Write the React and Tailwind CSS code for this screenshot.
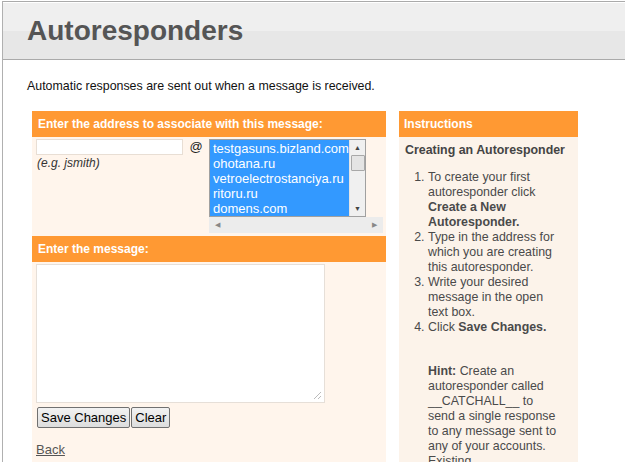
import React from 'react';

const domains = [
  'testgasuns.bizland.com',
  'ohotana.ru',
  'vetroelectrostanciya.ru',
  'ritoru.ru',
  'domens.com',
];

const Autoresponders = () => {
  return (
    <div className="min-h-[462px] bg-white font-['Liberation_Sans',Arial,sans-serif] text-[12px] text-[#222] overflow-hidden">
      <div className="ml-[2px] border-l border-[#b0b0b0] min-h-[462px]">
        {/* Page title band */}
        <div className="mt-[1px] border-t border-[#aaa] pt-[1px]">
          <div className="h-[57px] flex items-center pl-[24px] border-b border-[#aaa] bg-[linear-gradient(#efefef_50%,#e7e7e7_50%)]">
            <h1 className="text-[28px] font-bold text-[#555] leading-none">Autoresponders</h1>
          </div>
        </div>

        <p className="mt-[19px] pl-[24px] leading-[14px] text-[12.4px] text-[#111]">
          Automatic responses are sent out when a message is received.
        </p>

        <div className="flex gap-[13px] mt-[18px] pl-[29px]">
          {/* Left: form */}
          <div className="w-[354px] bg-[#fff5ec] pb-[8px]">
            <div className="h-[26px] bg-[#ff9933] flex items-center px-[6px] text-white font-bold">
              Enter the address to associate with this message:
            </div>

            <div className="flex pt-[2px] pl-[4px] h-[99px]">
              <div className="w-[147px]">
                <div className="h-[16px] bg-white border border-[#e8ded4]"></div>
                <div className="mt-[1px] italic text-[#333] leading-[15px] pl-[1px]">(e.g. jsmith)</div>
              </div>
              <div className="w-[26px] text-center text-[13px] leading-[14px] pt-[1px] text-[#222]">@</div>
              <div className="flex-1 flex flex-col">
                <div className="flex h-[78px] w-[157px] border border-[#a0a0a0] bg-white">
                  <ul className="flex-1 bg-[#3399ff] text-white text-[13px] leading-[15px] pt-[1px] pl-[3px]">
                    {domains.map((d) => (
                      <li key={d} className="whitespace-nowrap">{d}</li>
                    ))}
                  </ul>
                  <div className="w-[16px] bg-[#f0f0f0] flex flex-col items-center border-l border-[#e4e4e4]">
                    <span className="h-[15px] text-[7px] leading-[15px] text-[#444]">▲</span>
                    <span className="w-[14px] h-[16px] bg-[#e4e4e4] border border-[#a8a8a8] rounded-[1px]"></span>
                    <span className="flex-1"></span>
                    <span className="h-[15px] text-[7px] leading-[15px] text-[#444]">▼</span>
                  </div>
                </div>
                <div className="h-[16px] w-[174px] bg-[#ececec] flex items-center justify-between px-[6px] text-[7px] text-[#888]">
                  <span>◀</span>
                  <span>▶</span>
                </div>
              </div>
            </div>

            <div className="h-[26px] bg-[#ff9933] flex items-center px-[6px] text-white font-bold">
              Enter the message:
            </div>

            <div className="pl-[4px] pt-[2px]">
              <div className="relative w-[289px] h-[139px] bg-white border border-[#e6dfd8]">
                <svg className="absolute right-[2px] bottom-[2px]" width="10" height="10" viewBox="0 0 10 10">
                  <path d="M9 2 L2 9 M9 6 L6 9" stroke="#bbb" strokeWidth="1" />
                </svg>
              </div>
              <div className="flex gap-[1px] mt-[4px] pl-[1px]">
                <button className="h-[21px] px-[3px] text-[13px] text-black bg-[linear-gradient(#f2f2f2,#dddddd)] border border-[#707070] rounded-[2px]">
                  Save Changes
                </button>
                <button className="h-[21px] px-[3px] text-[13px] text-black bg-[linear-gradient(#f2f2f2,#dddddd)] border border-[#707070] rounded-[2px]">
                  Clear
                </button>
              </div>
              <a href="#" className="inline-block mt-[12px] text-[13px] text-[#555] underline">Back</a>
            </div>
          </div>

          {/* Right: instructions */}
          <div className="w-[179px] bg-[#fcf3ea] pb-[20px]">
            <div className="h-[26px] bg-[#ff9933] flex items-center px-[5px] text-white font-bold">
              Instructions
            </div>
            <div className="pl-[6px] pr-[4px] pt-[6px] text-[#444] text-[12.4px] leading-[15px]">
              <h2 className="font-bold whitespace-nowrap">Creating an Autoresponder</h2>
              <ol className="list-decimal pl-[23px] pr-[12px] mt-[12px] text-[#4a4a4a]">
                <li>To create your first autoresponder click <b>Create a New Autoresponder.</b></li>
                <li>Type in the address for which you are creating this autoresponder.</li>
                <li>Write your desired message in the open text box.</li>
                <li>Click <b>Save Changes.</b></li>
              </ol>
              <p className="pl-[23px] pr-[15px] mt-[29px] text-[#4a4a4a]">
                <b>Hint:</b> Create an autoresponder called __CATCHALL__ to send a single response to any message sent to any of your accounts. Existing autoresponders will take priority.
              </p>
            </div>
          </div>
        </div>
      </div>
    </div>
  );
};

export default function App() {
  return <Autoresponders />;
}
